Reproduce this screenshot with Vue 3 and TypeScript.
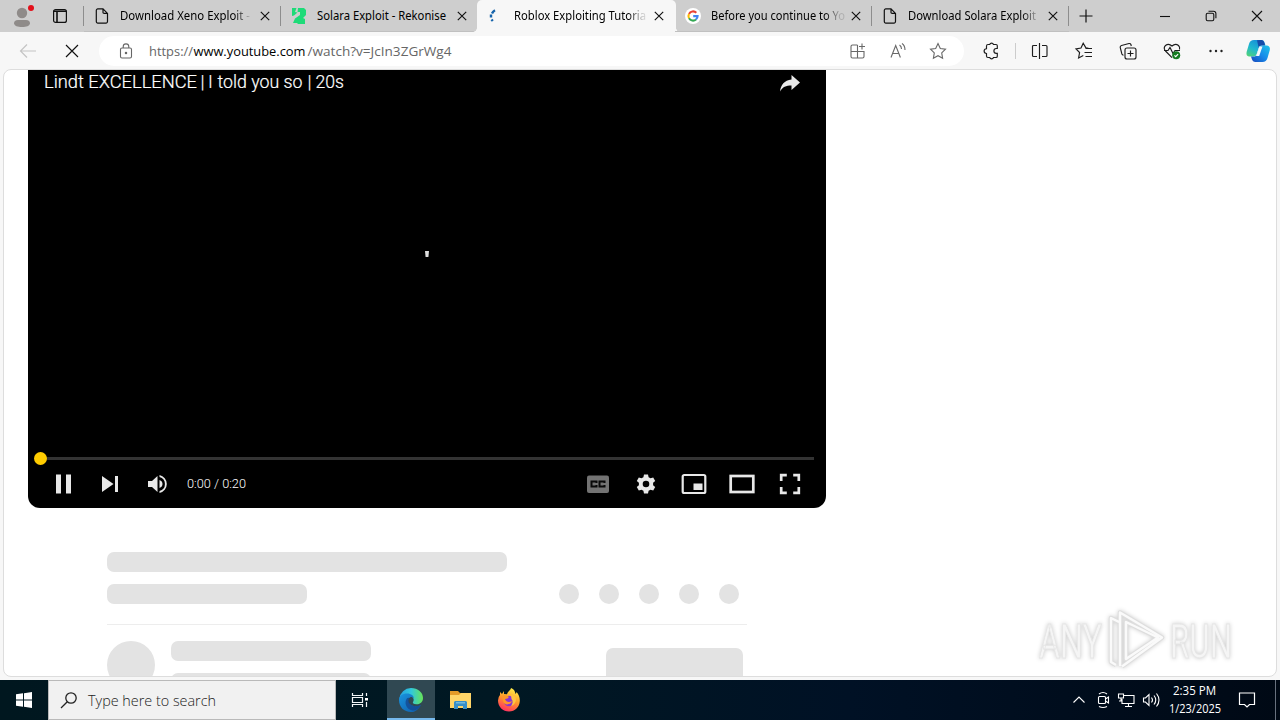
<script setup lang="ts">
interface Tab {
  title: string
  icon: 'page' | 'rekonise' | 'loading' | 'google'
  active?: boolean
  divider?: boolean
  fade?: boolean
  width: number
}

const tabs: Tab[] = [
  { title: 'Download Xeno Exploit -', icon: 'page', divider: true, fade: true, width: 130 },
  { title: 'Solara Exploit - Rekonise', icon: 'rekonise', width: 129 },
  { title: 'Roblox Exploiting Tutoria', icon: 'loading', active: true, fade: true, width: 132 },
  { title: 'Before you continue to Yo', icon: 'google', divider: true, fade: true, width: 134 },
  { title: 'Download Solara Exploit', icon: 'page', divider: true, fade: true, width: 128 },
]
</script>

<template>
  <div class="desktop">
    <header class="tabstrip">
      <div class="profile">
        <svg width="24" height="28" viewBox="0 0 24 28">
          <circle cx="11" cy="10" r="5.2" fill="#8f8b89" />
          <path d="M3 20.500q0-3.500 4-3.500h8q4 0 4 3.500c-.5 2.500-3.500 3.500-8 3.500s-7.500-1-8-3.500z" fill="#8f8b89" />
          <circle cx="20" cy="5" r="3" fill="#e3101a" />
        </svg>
      </div>
      <div class="workspaces">
        <svg width="16" height="16" viewBox="0 0 16 16" fill="none" stroke="#111" stroke-width="1.200">
          <rect x="1.600" y="1.600" width="12.800" height="12.800" rx="2" />
          <path d="M1.600 3.200h12.800M5 4v10.400" stroke-width="1.600" />
        </svg>
      </div>
      <i class="divider"></i>
      <div v-for="(t, i) in tabs" :key="i" class="tab" :class="{ active: t.active, divided: t.divider }">
        <svg v-if="t.icon === 'page'" class="fav" viewBox="0 0 16 16" fill="none" stroke="#111" stroke-width="1.200">
          <path d="M3.800.9h5.200l4.500 4.500v8.200a1.500 1.500 0 0 1-1.500 1.500H3.800a1.500 1.500 0 0 1-1.500-1.500V2.400A1.500 1.500 0 0 1 3.800.9zM9 .9v3.300q0 1.200 1.200 1.200h3.300" />
        </svg>
        <svg v-else-if="t.icon === 'rekonise'" class="fav" viewBox="0 0 16 16" fill="#1edb78">
          <path d="M1 0h4.500L4 4l2.500.5L3 7.500 1 8zM7 0h6l2 2v5l-3 3 2 1v5H7l-1-1H2l2-4.500L9 7V4H6.500z" />
        </svg>
        <svg v-else-if="t.icon === 'loading'" class="fav" viewBox="0 0 16 16" fill="none" stroke="#1664ab" stroke-width="2.400">
          <path d="M4 5.500Q4.800 3.500 7 2.300M3 6.500v3M3.500 11.500l1.300 1.500" />
        </svg>
        <svg v-else class="fav" viewBox="0 0 16 16" fill="none" stroke-width="2.100">
          <circle cx="8" cy="8" r="8" fill="#fff" />
          <path d="M11.300 4.700A4.600 4.600 0 0 0 4 5.900" stroke="#ea4335" />
          <path d="M4 5.900a4.600 4.600 0 0 0 0 4.400" stroke="#fbbc05" />
          <path d="M4 10.300a4.600 4.600 0 0 0 7 1.200" stroke="#34a853" />
          <path d="M11 11.500a4.600 4.600 0 0 0 1.600-3.400H8.200" stroke="#4285f4" />
        </svg>
        <span class="tab-title" :class="{ fade: t.fade }">
          <svg width="136" height="20"><text x="0" y="14" :textLength="t.width" lengthAdjust="spacingAndGlyphs">{{ t.title }}</text></svg>
        </span>
        <svg class="close" width="10" height="10" viewBox="0 0 10 10" stroke="#111" stroke-width="1.150"><path d="M.8.8l8.400 8.400M9.200.8L.8 9.200" /></svg>
      </div>
      <svg class="newtab" width="14" height="14" viewBox="0 0 14 14" stroke="#111"><path d="M7 .5v13M.5 7h13" stroke-width="1.200" /></svg>
      <div class="winbtns">
        <svg viewBox="0 0 12 12"><path d="M1 6.500h10" /></svg>
        <svg viewBox="0 0 12 12"><rect x="1.200" y="3.200" width="7.600" height="7.600" rx="1.500" /><path d="M3.500 1.200h5q2.400 0 2.400 2.400v4.600" /></svg>
        <svg viewBox="0 0 12 12"><path d="M1 1l10 10M11 1L1 11" /></svg>
      </div>
    </header>

    <nav class="toolbar">
      <svg class="back" width="18" height="16" viewBox="0 0 18 16" fill="none" stroke="#c4c4c4" stroke-width="1.200"><path d="M17 8H1.500M8 1.500L1.500 8 8 14.500" /></svg>
      <svg class="stop" width="14" height="14" viewBox="0 0 14 14" stroke="#111" stroke-width="1.150"><path d="M1 1l12 12M13 1L1 13" /></svg>
      <div class="address">
        <svg class="lock" width="14" height="16" viewBox="0 0 14 16" fill="none" stroke="#666" stroke-width="1.100">
          <rect x="1.500" y="5" width="11" height="10" rx="1.500" /><path d="M4.200 5V3.700a2.800 2.800 0 0 1 5.600 0V5" /><circle cx="7" cy="10" r=".7" fill="#666" />
        </svg>
        <svg class="url" width="310" height="24">
          <text x="0" y="17" fill="#666" textLength="44" lengthAdjust="spacingAndGlyphs">https://</text>
          <text x="44.500" y="17" fill="#000" textLength="112" lengthAdjust="spacingAndGlyphs">www.youtube.com</text>
          <text x="158.500" y="17" fill="#666" textLength="144" lengthAdjust="spacingAndGlyphs">/watch?v=JcIn3ZGrWg4</text>
        </svg>
        <div class="address-actions">
          <svg viewBox="0 0 18 18"><path d="M8.500 3H3.500Q2 3 2 4.500v10Q2 16 3.500 16h10q1.500 0 1.500-1.500V9.500H2M8.500 3v13M13 1.500v6M10 4.500h6" /></svg>
          <svg viewBox="0 0 18 18"><path d="M2 15.500L6.700 3.500l4.700 12M3.800 11.500h5.900M10.500 3q2 1.200 2 4M13 1.500q3 2 3 6.500" /></svg>
          <svg viewBox="0 0 18 18"><path d="M9 1.600l2.300 4.900 5.200.7-3.800 3.700.9 5.300L9 13.700l-4.600 2.500.9-5.300L1.500 7.200l5.200-.7z" /></svg>
        </div>
      </div>
      <div class="actions">
        <svg viewBox="0 0 18 18"><path d="M6 2.500h1.700a2 2 0 0 1 3.800 0H14q1.300 0 1.300 1.300v2.700h-1a2.300 2.300 0 0 0 0 4.800h1v2.900q0 1.300-1.300 1.300h-2.500a2 2 0 0 1-3.800 0H6q-1.500 0-1.500-1.500v-2.500a2.300 2.300 0 0 1 0-4.800V4Q4.500 2.500 6 2.500z" /></svg>
        <i class="small-divider"></i>
        <svg viewBox="0 0 18 18"><path d="M8.500 1v16M6 3.500H2.500q-1 0-1 1v9q0 1 1 1H6M11 3.500h4q1 0 1 1v9q0 1-1 1h-4" /></svg>
        <svg viewBox="0 0 18 18"><path d="M13.500 6.200l-2.600-.3L8.200 1.300 6 6.100l-5 .8 3.600 3.600-1 5.500 4.700-2.500M10.500 6.500h6.500M9.500 10.500h7.500M10.500 14.500h6.500" /></svg>
        <svg viewBox="0 0 18 18"><rect x="6" y="6" width="11" height="11" rx="2" /><path d="M11.500 8.500v6M8.500 11.500h6M4.500 13.200Q3.300 13 2.900 12L1.200 5.500Q1 3.900 2.500 3.500L10 1.500q1.500-.2 1.900 1l.4 1.500" /></svg>
        <svg viewBox="0 0 18 18"><path d="M9 15.700L2.500 9Q0 5.900 2.500 3.500 5.700.9 9 4q3.300-3.100 6.500-.5 1.700 1.700 1 4M1 8.500h4l2-3 3 6 2-3h5" /><circle cx="13.200" cy="13.300" r="4" fill="#157b20" stroke="none" /><path d="M11.400 13.400l1.300 1.200 2.400-2.500" stroke="#fff" /></svg>
        <svg viewBox="0 0 18 18"><g fill="#222" stroke="none"><circle cx="3.500" cy="9" r="1.200" /><circle cx="9" cy="9" r="1.200" /><circle cx="14.500" cy="9" r="1.200" /></g></svg>
      </div>
      <svg class="copilot" width="24" height="24" viewBox="0 0 24 24">
        <defs>
          <linearGradient id="cpA" x1=".6" y1="0" x2="0" y2="1"><stop offset="0" stop-color="#168ed8" /><stop offset=".5" stop-color="#20b8cf" /><stop offset="1" stop-color="#57d66d" /></linearGradient>
          <linearGradient id="cpB" x1="1" y1="0" x2="0" y2="1"><stop offset="0" stop-color="#1dc6e8" /><stop offset=".5" stop-color="#178bea" /><stop offset="1" stop-color="#1747bb" /></linearGradient>
        </defs>
        <path d="M8 1h7.500q2.500 0 3.200 3l.8 2.500h-4q-2 0-3 3L10.800 15q-.8 2.500-3.500 2.500H3Q-.2 17 .6 13L3 5q1-4 5-4z" fill="url(#cpA)" />
        <path d="M15.500 1q2 .4 2.700 2.500l.8 3h-4q-1.300-.1-2.500 1.500L11 1.200z" fill="#164ca8" />
        <path d="M16.800 6.500H21q3.500.5 2.800 4.500l-2.300 8q-1.200 4-5 4H9q-2.400-.2-3-2.500l-1-3h3.300q2 0 2.900-2.800l1.900-5.500q.9-2.700 3.700-2.700z" fill="url(#cpB)" />
        <path d="M13.500 7.500h3l-3.300 9.500H10z" fill="#f4f7fa" />
      </svg>
    </nav>

    <main class="viewport">
      <section class="player">
        <div class="video-head">
          <svg width="310" height="28">
            <text y="20"><tspan x="0" textLength="153" lengthAdjust="spacingAndGlyphs">Lindt EXCELLENCE</tspan><tspan x="156.500">|</tspan><tspan x="164">I</tspan><tspan x="173.500" textLength="85" lengthAdjust="spacingAndGlyphs">told you so</tspan><tspan x="263.500">|</tspan><tspan x="271.500" textLength="28.500" lengthAdjust="spacingAndGlyphs">20s</tspan></text>
          </svg>
          <svg class="share" width="22" height="20" viewBox="0 0 22 20" fill="#e8e8e8"><path d="M12.500 1l8.500 7.500-8.500 7.500v-4.500C7 11.500 3.500 13 1 17.500 1.800 10.800 5.300 6.500 12.500 5.500z" /></svg>
        </div>
        <i class="spark"></i>
        <div class="progress"><i class="knob"></i></div>
        <div class="controls">
          <svg class="pause" width="20" height="20" viewBox="0 0 20 20"><path d="M3 .5h5v19H3zM13 .5h5v19h-5z" /></svg>
          <svg class="next" width="20" height="20" viewBox="0 0 20 20"><path d="M2 2l11.500 8L2 18zM15 2h3v16h-3z" /></svg>
          <svg class="volume" width="20" height="20" viewBox="0 0 20 20"><path d="M1 7h4l5.500-5v16L5 13H1zM12.500 6v8q3-1.200 3-4t-3-4zM12.500 1v2.100a7.100 7.100 0 0 1 0 13.800V19a9.200 9.200 0 0 0 0-18z" /></svg>
          <svg class="time" width="64" height="20"><text x="0" y="14" textLength="59" lengthAdjust="spacingAndGlyphs">0:00 / 0:20</text></svg>
          <div class="right-controls">
            <svg viewBox="0 0 26 22"><rect x="2" y="2.500" width="22" height="17.500" rx="2" fill="#737373" /><path d="M11.500 10V8.500h-5v5h5V12M19.500 10V8.500h-5v5h5V12" fill="none" stroke="#090909" stroke-width="2" /></svg>
            <svg viewBox="0 0 26 22"><path transform="translate(0 .5)" fill-rule="evenodd" d="M11 1h4l.6 2.700 1.900 1.100 2.700-.9 2 3.500-2.100 1.900v2.400l2.100 1.900-2 3.500-2.700-.9-1.900 1.100L15 20h-4l-.6-2.700-1.900-1.100-2.700.9-2-3.500 2.100-1.900V9.300L3.800 7.400l2-3.500 2.700.9 1.900-1.100zM13 7.200a3.300 3.300 0 1 0 0 6.600 3.300 3.300 0 0 0 0-6.600z" /></svg>
            <svg viewBox="0 0 26 22"><rect x="1.700" y="2" width="22.600" height="18" rx="1.500" fill="none" stroke="#e8e8e8" stroke-width="2.200" /><path d="M12.500 10.500h9V17h-9z" /></svg>
            <svg viewBox="0 0 26 22"><rect x="1.700" y="3" width="22.600" height="16" fill="none" stroke="#e8e8e8" stroke-width="2.700" /></svg>
            <svg viewBox="0 0 26 22"><path d="M4.200 8V2.200h5.600M16.200 2.200h5.600V8M21.800 14v5.800h-5.600M9.800 19.800H4.200V14" fill="none" stroke="#e8e8e8" stroke-width="2.700" /></svg>
          </div>
        </div>
      </section>
      <section class="skeleton">
        <div class="bone wide"></div>
        <div class="meta"><div class="bone short"></div><div class="dots"><i v-for="n in 5" :key="n"></i></div></div>
        <div class="owner"><i class="avatar"></i><div class="owner-lines"><div class="bone short"></div><div class="bone short"></div></div><div class="subscribe"></div></div>
      </section>
      <svg class="watermark" width="204" height="72" viewBox="0 0 204 72">
        <g class="mark-text"><text x="4" y="51" textLength="63" lengthAdjust="spacingAndGlyphs">ANY</text><text x="135" y="51" textLength="62" lengthAdjust="spacingAndGlyphs">RUN</text></g>
        <g class="mark-shape" fill="none" stroke-linejoin="round">
          <path d="M84 15L76 11v44l5 3M85 59V5.500l42 25-40 29M91 15v37l32-21.500z" stroke="#dedede" stroke-width="4.500" />
          <path d="M84 15L76 11v44l5 3M85 59V5.500l42 25-40 29M91 15v37l32-21.500z" stroke="#fafafa" stroke-width="2.500" />
        </g>
      </svg>
    </main>

    <footer class="taskbar">
      <div class="start"><svg width="16" height="16" viewBox="0 0 16 16" fill="#fff"><path d="M0 2.300l7-1v6.200H0zM8 1.200L16 0v7.500H8zM0 8.500h7v6.200l-7-1zM8 8.500h8V16l-8-1.200z" /></svg></div>
      <div class="search">
        <svg width="18" height="18" viewBox="0 0 18 18" fill="none" stroke="#222" stroke-width="1.300"><circle cx="11" cy="7" r="5.200" /><path d="M7.300 10.800L1 17" /></svg>
        <svg class="search-text" width="135" height="24"><text x="0" y="18" textLength="128" lengthAdjust="spacingAndGlyphs">Type here to search</text></svg>
      </div>
      <div class="app taskview"><svg width="18" height="18" viewBox="0 0 18 18" fill="none" stroke="#f3f6f7" stroke-width="1.200"><path d="M1.500 2v2.500h10V2M1.500 16v-2.500h10V16M1.500 6.500h10v5h-10zM15.500 2v3M15.500 11v5" /><path d="M14 7h3v2.500h-3z" fill="#fff" stroke="none" /></svg></div>
      <div class="app current">
        <svg width="24" height="24" viewBox="0 0 24 24">
          <defs><linearGradient id="edgeTop" x1="0" x2="1"><stop offset="0" stop-color="#249fe0" /><stop offset=".5" stop-color="#31c8dc" /><stop offset="1" stop-color="#67e457" /></linearGradient><linearGradient id="edgeLow" x1="0" y1="0" x2="1" y2="1"><stop offset="0" stop-color="#1994de" /><stop offset="1" stop-color="#105ba9" /></linearGradient></defs>
          <path d="M.3 11A12 12 0 0 1 12 0c7 0 12 4.500 12 10 0 4-3 6.300-6.500 6.300-3 0-4.200-1.200-3.500-2.200 1.500-2 .8-5.600-3.600-6.300C6.500 7.200 2.500 8 .3 11z" fill="url(#edgeTop)" />
          <path d="M0 12c0-4 3.500-6.500 8-6.500 4.200 0 7 2.500 7 5-1-1.200-2.700-1.800-4-1.100-2.500 1.300-2.500 5 .4 7.200 3.100 2.400 7 2.100 10.500.3C19.500 21.500 16 24 12 24 5 24 0 19 0 12z" fill="url(#edgeLow)" />
          <path d="M8 10.200c-3.300 4.200-.7 10.600 4.500 12.100 3.800 1 7.300-1.500 9.400-5.400-4.300 2-8 1.500-10.700-1-2-1.800-2-4.200-.7-5.800q-1.200-.8-2.500.1z" fill="#14468d" opacity=".75" />
        </svg>
      </div>
      <div class="app"><svg width="23" height="20" viewBox="0 0 23 20"><path d="M1 1h8l2 2h11v15H1z" fill="#e49b28" /><path d="M1 5h9l2-2h10v15H1z" fill="#ffd568" /><path d="M5 19v-7l1-1h11l1 1v7h-4v-3H9v3z" fill="#368ec8" /><path d="M7 12h9v1.500H7z" fill="#72b9dd" /></svg></div>
      <div class="app"><svg width="24" height="24" viewBox="0 0 24 24">
        <defs><linearGradient id="fox" x1=".7" y1="0" x2=".3" y2="1"><stop offset="0" stop-color="#fff04b" /><stop offset=".48" stop-color="#ff9b29" /><stop offset="1" stop-color="#ff2c63" /></linearGradient></defs>
        <path d="M3 4l2 2 2-3v3l3 .2C11 3 14 2 14 0c3 1 4 3 4.500 6q1-1 1-2c2.200 2.600 3.500 5.500 3.300 9C22.500 19 18 23.500 12 23.500S1 19 1 12.500Q1 9 3 7z" fill="url(#fox)" />
        <circle cx="12" cy="13" r="5.300" fill="#8a35d3" /><path d="M5 8q4-2 7 1-1 2-4 2c1 3 4 4 7 2-1 4-8 5-9 0z" fill="#ff9827" /><path d="M14 7q5 0 5 5-1 5-5 6 3-4 .5-7z" fill="#ffc440" />
      </svg></div>
      <div class="tray">
        <svg width="14" height="14" viewBox="0 0 14 14"><path d="M1.500 9.500L7 4l5.500 5.500" /></svg>
        <svg class="camera" width="16" height="18" viewBox="0 0 16 18"><rect x="3.500" y="5.500" width="7" height="7" rx="1" /><path d="M10.500 8l3-2v6l-3-2M4 3q4-3 8 0M4 15.500q4 2 8 0" /></svg>
        <svg width="18" height="18" viewBox="0 0 18 18"><path d="M6 4.500h11v8H5V8M8 15.500h7M11.500 12.500v3M1.500 3h5v4h-5zM4 7v3H2" /></svg>
        <svg width="18" height="18" viewBox="0 0 18 18"><path d="M1.500 7h2L7 3.500v11L3.500 11h-2zM9.500 6.500q2 2.500 0 5M12 4.500q3.500 4.500 0 9M14.500 2.500q5 6.500 0 13" /></svg>
      </div>
      <div class="clock">
        <svg width="54" height="36"><text x="5" y="14" textLength="43" lengthAdjust="spacingAndGlyphs">2:35 PM</text><text x="1" y="32" textLength="52" lengthAdjust="spacingAndGlyphs">1/23/2025</text></svg>
      </div>
      <svg class="notice" width="18" height="18" viewBox="0 0 18 18" fill="none" stroke="#fff" stroke-width="1.200"><path d="M1.500 2h15v11.500h-5L9 16l-2.500-2.500h-5z" /></svg>
      <i class="show-desktop"></i>
    </footer>
  </div>
</template>

<style>
html, body { margin: 0; overflow: hidden; }
</style>

<style scoped>
* { box-sizing: border-box; }
svg { display: block; flex-shrink: 0; overflow: visible; }
.desktop { width: 1280px; height: 720px; overflow: hidden; background: #f7f7f7; font-family: "Noto Sans", "Open Sans", sans-serif; display: flex; flex-direction: column; }
.tabstrip { height: 32px; display: flex; background: #cecece; flex-shrink: 0; }
.profile { width: 48px; padding: 3px 0 0 11px; }
.workspaces { width: 35px; padding: 8px 0 0 4px; }
.divider { width: 1px; height: 20px; margin-top: 6px; background: #8d8d8d; }
.tab { width: 197px; height: 32px; display: flex; align-items: center; position: relative; padding-left: 10px; flex-shrink: 0; border-bottom: 1px solid #c0c0c0; }
.tab.divided::after { content: ""; position: absolute; right: 0; top: 6px; width: 1px; height: 20px; background: #8d8d8d; }
.tab.active { background: #f7f7f7; border: 0; border-radius: 5px 5px 0 0; width: 199px; margin-left: -1px; margin-right: -1px; padding-left: 11px; }
.tab.active::before, .tab.active::after { content: ""; position: absolute; bottom: 0; width: 4px; height: 4px; }
.tab.active::before { left: -4px; background: radial-gradient(circle at 0 0, transparent 3.500px, #f7f7f7 4px); }
.tab.active::after { right: -4px; background: radial-gradient(circle at 100% 0, transparent 3.500px, #f7f7f7 4px); }
.fav { width: 16px; height: 16px; }
.tab-title { width: 136px; height: 20px; margin-left: 10px; }
.tab-title.fade { mask-image: linear-gradient(90deg, #000 84%, rgba(0, 0, 0, .15) 95%); }
.tab-title text { font-size: 12px; fill: #000; }
.tab .close { margin-left: 4px; }
.newtab { margin: 9px 0 0 10px; }
.winbtns { display: flex; margin-left: auto; padding: 10px 17px 0 0; gap: 34px; }
.winbtns svg { width: 12px; height: 12px; fill: none; stroke: #111; stroke-width: 1.100; }
.toolbar { height: 38px; display: flex; align-items: center; flex-shrink: 0; }
.back { margin-left: 19px; }
.stop { margin-left: 28px; }
.address { margin-left: 20px; width: 865px; height: 30px; border-radius: 15px; background: #fff; display: flex; align-items: center; padding-left: 20px; }
.url { margin-left: 16px; font-size: 13.500px; font-family: "Open Sans", "Noto Sans", sans-serif; font-weight: 400; }
.address-actions { display: flex; margin-left: auto; gap: 22px; padding-right: 17px; }
.address-actions svg { width: 18px; height: 18px; fill: none; stroke: #686868; stroke-width: 1.100; }
.actions { display: flex; margin-left: 18px; gap: 26px; }
.actions svg { width: 18px; height: 18px; fill: none; stroke: #1d1d1d; stroke-width: 1.150; }
.small-divider { width: 1px; height: 16px; margin: 1px -11px 0 -11px; background: #ccc; }
.copilot { margin-left: 21px; }
.viewport { position: relative; width: 1274px; height: 608px; margin-left: 3px; background: #fff; border: 1px solid #ddd; border-radius: 8px; overflow: hidden; flex-shrink: 0; margin-top: -1px; }
.player { position: relative; width: 798px; height: 438px; margin-left: 24px; background: #000; border-radius: 0 0 12px 12px; display: flex; flex-direction: column; }
.video-head { display: flex; height: 28px; padding-left: 16px; }
.video-head svg:first-child { margin-top: -2px; }
.video-head text { font: 300 18px Roboto, sans-serif; fill: #fff; stroke: #fff; stroke-width: .2; }
.share { margin: 4px 25px 0 auto; }
.spark { position: absolute; left: 397px; top: 181px; width: 4px; height: 6px; background: #ddd; clip-path: polygon(0 0, 100% 0, 85% 100%, 15% 100%); }
.progress { position: relative; height: 3px; margin: 359px 12px 0; background: #333; }
.knob { position: absolute; width: 13px; height: 13px; border-radius: 50%; background: #ffcc00; left: -6px; top: -5px; }
.controls { display: flex; align-items: center; height: 40px; margin-top: 4px; padding: 0 23px 0 25px; fill: #e8e8e8; }
.next { margin-left: 27px; }
.volume { margin-left: 27px; }
.time { margin-left: 20px; font: 300 13px Roboto, sans-serif; fill: #fff; }
.right-controls { display: flex; gap: 22px; margin-left: auto; }
.right-controls svg { width: 26px; height: 22px; }
.skeleton { width: 640px; margin: 44px 0 0 103px; }
.bone { height: 20px; border-radius: 7px; background: #e3e3e3; }
.wide { width: 400px; }
.short { width: 200px; }
.meta { display: flex; justify-content: space-between; margin-top: 12px; height: 41px; border-bottom: 1px solid #ededed; }
.dots { display: flex; gap: 20px; padding-right: 8px; }
.dots i { width: 20px; height: 20px; border-radius: 50%; background: #e3e3e3; }
.owner { display: flex; margin-top: 16px; }
.avatar { width: 48px; height: 48px; border-radius: 50%; background: #e3e3e3; }
.owner-lines { display: flex; flex-direction: column; gap: 12px; margin-left: 16px; }
.subscribe { width: 137px; height: 40px; border-radius: 7px; background: #e3e3e3; margin: 7px 4px 0 auto; }
.watermark { position: absolute; left: 1031px; top: 537px; }
.mark-text { font: 49px Roboto, sans-serif; fill: #f5f5f5; stroke: #e6e6e6; stroke-width: 1; filter: drop-shadow(0 0 2px #ccc); }
.mark-shape { filter: drop-shadow(0 0 2px #ccc); }
.taskbar { position: relative; height: 40px; margin-top: auto; background: linear-gradient(90deg, #00171f 0, #001823 500px, #001125 850px, #000915); display: flex; flex-shrink: 0; }
.start { width: 48px; display: grid; place-items: center; }
.search { width: 288px; background: #f1f1f1; border: 1px solid #b9b9b9; display: flex; align-items: center; padding-left: 11px; }
.search-text { margin-left: 10px; font-size: 15px; fill: #222; font-family: "Open Sans", sans-serif; font-weight: 350; }
.app { width: 48px; margin-right: 1px; display: grid; place-items: center; }
.taskview { margin-right: 3px; }
.current { background: #304852; border-bottom: 2px solid #76b9ed; padding-top: 2px; }
.tray { display: flex; align-items: center; margin-left: auto; gap: 7px; fill: none; stroke: #fff; stroke-width: 1.100; }
.camera { margin-left: 2px; margin-right: -1px; }
.clock { width: 54px; margin-left: 8px; padding-top: 1px; }
.clock text { font-size: 12px; fill: #fff; font-family: "Open Sans", sans-serif; }
.notice { margin: 11px 19px 0 16px; }
.show-desktop { width: 5px; border-left: 1px solid #68717e; }
</style>
